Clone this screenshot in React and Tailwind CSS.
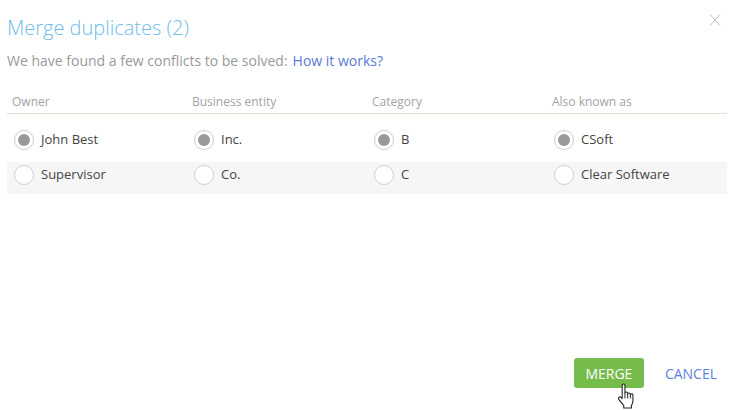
import React from 'react';

const columns = [
  { title: 'Owner', first: 'John Best', second: 'Supervisor' },
  { title: 'Business entity', first: 'Inc.', second: 'Co.' },
  { title: 'Category', first: 'B', second: 'C' },
  { title: 'Also known as', first: 'CSoft', second: 'Clear Software' },
];

const Radio = ({ checked, label }) => (
  <div className="flex items-center">
    <span className="w-5 h-5 ml-[7px] rounded-full border border-[#cfcfcf] bg-white flex items-center justify-center shrink-0">
      {checked && <span className="w-3 h-3 rounded-full bg-[#999999]" />}
    </span>
    <span className="ml-[7px] text-[13px] text-[#444444]">{label}</span>
  </div>
);

const HandCursor = () => (
  <svg className="absolute left-[42px] top-[25px]" width="22" height="28" viewBox="0 0 20 26">
    <path
      d="M5.5 2.2c0-1.6 2.6-1.6 2.6 0v7.2c0-1.3 2.5-1.3 2.5 0v.8c0-1.3 2.5-1.3 2.5 0v.8c0-1.2 2.4-1.2 2.4.2v5.6c0 2-.6 3-1.4 4.2v2.2H7v-2.4c-1.2-1.4-3.2-3.4-4.6-5.6-1-1.6.8-3 2.1-1.8l1 1.1z"
      fill="#ffffff"
      stroke="#222222"
      strokeWidth="1"
      strokeLinejoin="round"
    />
    <path d="M8.1 9.4v5M10.6 10.2v4.2M13.1 11v3.4" stroke="#222222" strokeWidth="0.9" fill="none" />
  </svg>
);

const App = () => {
  return (
    <div className="relative w-[732px] h-[410px] bg-white overflow-hidden flex flex-col font-['Open_Sans',sans-serif]">
      <div className="flex items-start justify-between pl-[7px] pr-[11px] pt-[13px]">
        <h1 className="text-[20px] leading-[30px] font-light text-[#6cbde8]">Merge duplicates (2)</h1>
        <svg width="12" height="13" viewBox="0 0 12 13">
          <path d="M1 1.5l10 11M11 1.5L1 12.5" stroke="#bdbdbd" strokeWidth="1" fill="none" />
        </svg>
      </div>

      <p className="pl-[7px] mt-[8px] text-[14px] leading-[20px] text-[#999999]">
        We have found a few conflicts to be solved:
        <a className="ml-[5px] text-[#5b78d6]">How it works?</a>
      </p>

      <div className="mx-[7px] mt-[22px] w-[720px]">
        <div className="grid grid-cols-4 border-b border-[#e4e2d6] h-[21px]">
          {columns.map((col) => (
            <div key={col.title} className="pl-[5px] text-[12px] leading-[17px] text-[#a3a3a3]">{col.title}</div>
          ))}
        </div>
        <div className="grid grid-cols-4 h-[48px] items-center pt-[3px]">
          {columns.map((col) => (
            <Radio key={col.first} checked label={col.first} />
          ))}
        </div>
        <div className="grid grid-cols-4 h-[32px] items-start pt-[3px] bg-[#f6f6f6]">
          {columns.map((col) => (
            <Radio key={col.second} label={col.second} />
          ))}
        </div>
      </div>

      <div className="mt-auto flex items-center justify-end pr-[15px] pb-[22px]">
        <div className="relative">
          <button className="w-[70px] h-[30px] rounded-[3px] bg-[#76bc4b] text-white text-[14px] font-normal">MERGE</button>
          <HandCursor />
        </div>
        <a className="ml-[21px] text-[14px] text-[#5b82e0]">CANCEL</a>
      </div>
    </div>
  );
};

export default App;
